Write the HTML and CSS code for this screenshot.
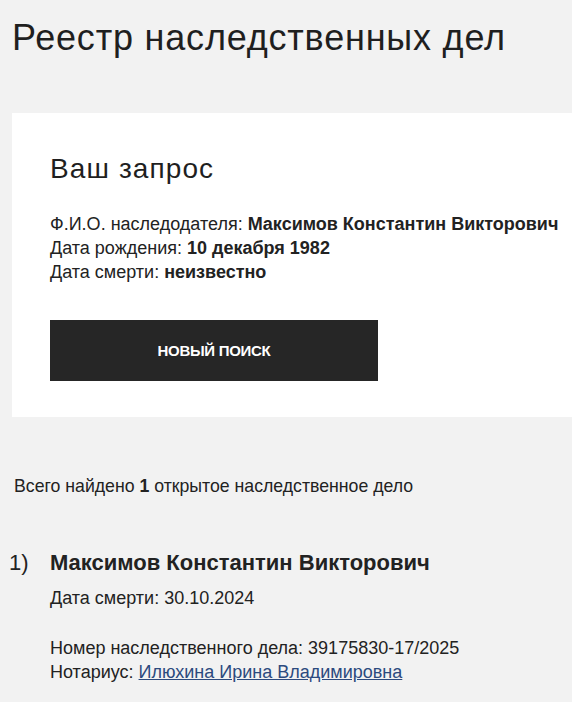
FILE: index.html
```html
<!DOCTYPE html>
<html lang="ru">
<head>
<meta charset="utf-8">
<title>Реестр наследственных дел</title>
<link rel="stylesheet" href="styles.css">
</head>
<body>
<main class="page">
  <h1 class="title">Реестр наследственных дел</h1>
  <section class="card">
    <h2 class="card-title">Ваш запрос</h2>
    <div class="query">
      <div class="line">Ф.И.О. наследодателя: <b>Максимов Константин Викторович</b></div>
      <div class="line">Дата рождения: <b>10 декабря 1982</b></div>
      <div class="line">Дата смерти: <b>неизвестно</b></div>
    </div>
    <button class="btn" type="button">НОВЫЙ ПОИСК</button>
  </section>
  <p class="summary">Всего найдено <b>1</b> открытое наследственное дело</p>
  <ol class="results">
    <li class="result">
      <span class="num">1)</span>
      <div class="result-body">
        <div class="name">Максимов Константин Викторович</div>
        <div class="line">Дата смерти: 30.10.2024</div>
        <div class="details">
          <div class="line">Номер наследственного дела: 39175830-17/2025</div>
          <div class="line">Нотариус: <a class="link" href="#">Илюхина Ирина Владимировна</a></div>
        </div>
      </div>
    </li>
  </ol>
</main>
</body>
</html>
```

FILE: styles.css
```css
html, body {
  margin: 0;
  padding: 0;
  background: #f2f2f2;
  overflow: hidden;
}
body {
  font-family: "Liberation Sans", Arial, sans-serif;
  color: #222222;
}
.page {
  padding-left: 12px;
}
.title {
  margin: 18px 0 55px;
  font-size: 36px;
  line-height: 40px;
  font-weight: 400;
  letter-spacing: 0.8px;
  color: #1f1f1f;
}
.card {
  background: #ffffff;
  padding: 40px 0 36px 38px;
}
.card-title {
  margin: 0 0 27px;
  font-size: 28px;
  line-height: 32px;
  font-weight: 400;
  letter-spacing: 1.1px;
  color: #1f1f1f;
}
.line {
  font-size: 18px;
  line-height: 24px;
  white-space: nowrap;
}
.line b {
  font-weight: 700;
}
.btn {
  display: block;
  margin-top: 36px;
  width: 328px;
  height: 61px;
  border: 0;
  border-radius: 0;
  background: #262626;
  color: #ffffff;
  font-family: "Liberation Sans", Arial, sans-serif;
  font-size: 15px;
  font-weight: 700;
  letter-spacing: -0.3px;
}
.summary {
  margin: 57px 0 0;
  padding-left: 2px;
  font-size: 17.7px;
  line-height: 24px;
}
.results {
  list-style: none;
  margin: 51px 0 0;
  padding: 0;
}
.result {
  display: grid;
  grid-template-columns: 38px 1fr;
}
.num {
  font-size: 22px;
  line-height: 28px;
  margin-left: -3px;
}
.name {
  font-size: 22px;
  line-height: 28px;
  font-weight: 700;
  margin-bottom: 9px;
}
.details {
  margin-top: 26px;
}
.link {
  color: #2c4a7e;
  text-decoration: underline;
}
```
